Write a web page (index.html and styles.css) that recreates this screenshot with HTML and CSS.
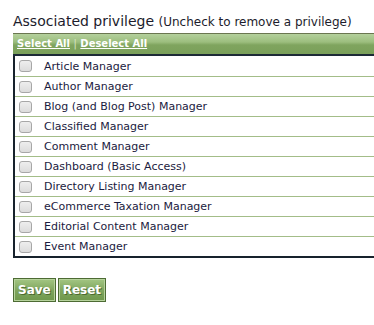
FILE: index.html
```html
<!DOCTYPE html>
<html lang="en">
<head>
    <meta charset="UTF-8">
    <title>Associated privilege</title>
    <link rel="stylesheet" href="styles.css">
</head>
<body>
<div class="page">
    <h2 class="title">Associated privilege <span class="hint">(Uncheck to remove a privilege)</span></h2>
    <div class="privileges">
        <div class="bar">
            <a href="#">Select All</a> <span class="sep">|</span> <a href="#">Deselect All</a>
        </div>
        <ul class="list">
            <li><input type="checkbox"> Article Manager</li>
            <li><input type="checkbox"> Author Manager</li>
            <li><input type="checkbox"> Blog (and Blog Post) Manager</li>
            <li><input type="checkbox"> Classified Manager</li>
            <li><input type="checkbox"> Comment Manager</li>
            <li><input type="checkbox"> Dashboard (Basic Access)</li>
            <li><input type="checkbox"> Directory Listing Manager</li>
            <li><input type="checkbox"> eCommerce Taxation Manager</li>
            <li><input type="checkbox"> Editorial Content Manager</li>
            <li><input type="checkbox"> Event Manager</li>
        </ul>
    </div>
    <div class="buttons">
        <button class="btn">Save</button>
        <button class="btn">Reset</button>
    </div>
</div>
</body>
</html>
```

FILE: styles.css
```css
html, body {
    margin: 0;
    overflow: hidden;
    background: #fff;
}

.page {
    padding: 13px 0 0 13px;
    font-family: "DejaVu Sans", Verdana, sans-serif;
}

.title {
    margin: 0 0 2px;
    font-size: 14px;
    font-weight: normal;
    line-height: 17px;
    color: #1c1c2c;
}

.hint {
    font-size: 12px;
}

.privileges {
    border-left: 2px solid #17222c;
    border-bottom: 2px solid #17222c;
}

.bar {
    height: 20px;
    line-height: 20px;
    padding-left: 4px;
    border-top: 1px solid #6a7650;
    border-bottom: 2px solid #1c2a36;
    margin-left: -2px;
    background: linear-gradient(#b4d09c, #9cbe7e 40%, #7fa45e 55%, #7aa05a);
    font-size: 10px;
    font-weight: bold;
    color: #dfe8cf;
}

.bar a {
    color: #fff;
    text-decoration: underline;
}

.sep {
    font-weight: normal;
    color: #d8e4c4;
}

.list {
    list-style: none;
    margin: 0;
    padding: 0;
}

.list li {
    display: flex;
    align-items: center;
    height: 19px;
    border-top: 1px solid #a3bd88;
    font-size: 11px;
    color: #1b1b3e;
}

.list li:first-child {
    border-top: none;
    height: 20px;
}

.list input {
    width: 13px;
    height: 12px;
    margin: 0 12px 0 4px;
    appearance: none;
    border: 1px solid #a7a7a7;
    border-radius: 3px;
    background: linear-gradient(#eee, #dcdcdc);
}

.buttons {
    display: flex;
    gap: 2px;
    margin-top: 20px;
}

.btn {
    height: 24px;
    padding: 0 4px;
    border: 1px solid #4d6b34;
    box-shadow: inset 0 0 0 1px #b6d39c;
    background: linear-gradient(#a3c683, #7ea45c 55%, #6f984c);
    font-family: "DejaVu Sans", Verdana, sans-serif;
    font-size: 12px;
    font-weight: bold;
    color: #fff;
    text-shadow: 1px 1px 0 #4c6a30;
}
```
